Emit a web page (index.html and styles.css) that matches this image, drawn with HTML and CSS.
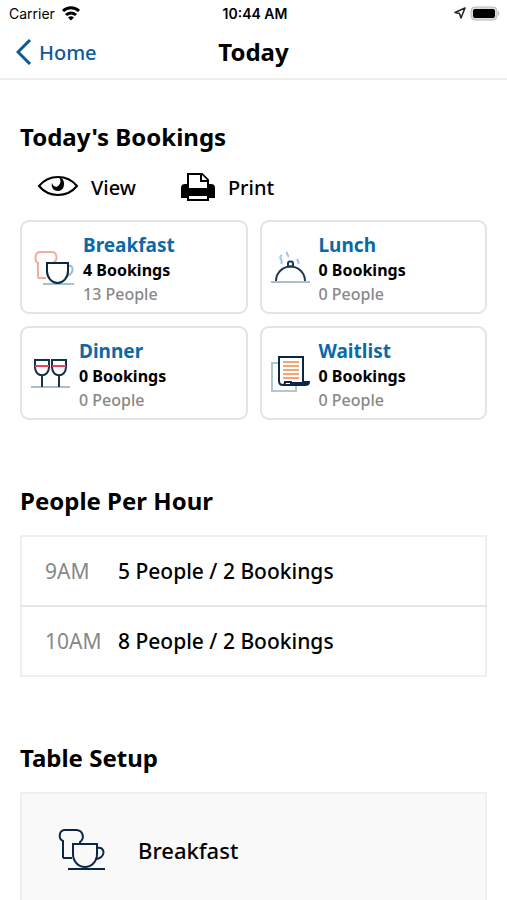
FILE: index.html
```html
<!DOCTYPE html>
<html lang="en">
  <head>
    <meta charset="utf-8">
    <meta name="viewport" content="width=device-width, initial-scale=1">
    <title>Today</title>
    <link rel="stylesheet" href="styles.css">
  </head>

  <body>
    <div class="statusBar">
      <div class="statusLeft">
        <span>Carrier</span>
        <svg width="20" height="15" viewBox="0 0 20 15" fill="none" stroke="#000" stroke-width="3">
          <path d="M2 5a11.500 11.500 0 0 1 16 0"/>
          <path d="M5 9a7 7 0 0 1 10 0"/>
          <path d="M10 14.500l-3-3a4.500 4.500 0 0 1 6 0z" fill="#000" stroke="none"/>
        </svg>
      </div>
      <div class="statusTime">10:44 AM</div>
      <div class="statusRight">
        <svg width="12" height="12" viewBox="0 0 12 12" fill="none" stroke="#222" stroke-width="1.500" stroke-linejoin="round">
          <path d="M11 1L1 5.500l4.500 1L7 11z"/>
        </svg>
        <svg width="31" height="15" viewBox="0 0 31 15">
          <rect x="1" y="1" width="26" height="13" rx="4" fill="#ddd" stroke="#bbb"/>
          <rect x="3" y="3" width="22" height="9" rx="2" fill="#000"/>
          <path d="M28 5a3 3 0 0 1 0 5z" fill="#bbb"/>
        </svg>
      </div>
    </div>

    <header class="navBar">
      <a class="back" href="#">
        <svg width="16" height="26" viewBox="0 0 16 26" fill="none" stroke="#0b5a9c" stroke-width="3">
          <path d="M14 1L2 13l12 12"/>
        </svg>
        Home
      </a>
      <h1>Today</h1>
    </header>

    <main>
      <section>
        <h2>Today's Bookings</h2>
        <div class="actions">
          <button class="action">
            <svg width="42" height="22" viewBox="0 0 42 22">
              <path d="M2 10C12-2 30-2 40 10 30 22 12 22 2 10z" fill="#fff" stroke="#000" stroke-width="2"/>
              <path d="M22 1c7 1 7 14-1 14-5 0-7-4-6-8 1 4 5 5 7 2 2-2 2-5 0-8z" fill="#000"/>
            </svg>
            View
          </button>
          <button class="action print">
            <svg width="36" height="30" viewBox="0 0 36 30">
              <path d="M1 16q0-4 4-4h26q4 0 4 4v10H1z" fill="#000"/>
              <path d="M8 17V2h14l6 6v9z" fill="#fff" stroke="#000" stroke-width="2"/>
              <path d="M21 2v7h7" fill="#fff" stroke="#000" stroke-width="2"/>
              <path d="M8 16h20v7H8z" fill="#000"/>
              <path d="M8 23h20v5H8z" fill="#fff" stroke="#000" stroke-width="2"/>
            </svg>
            Print
          </button>
        </div>

        <div class="cards">
          <a class="card breakfast" href="#">
            <svg width="44" height="40" viewBox="0 0 44 40" fill="none" stroke-width="2">
              <path d="M7 31V16C3 14 4 5 9 5h12c5 0 6 8 2 10v2M7 31h8" stroke="#f8aaa0"/>
              <path d="M37 19c7-2 6 10-3 10" stroke="#a3b8ca"/>
              <path d="M12 37h31" stroke="#a9bfcc"/>
              <path d="M16 16h21v8c0 7-5 12-10.500 12S16 31 16 24z" fill="#fff" stroke="#0b2748"/>
            </svg>
            <div class="cardText">
              <h3>Breakfast</h3>
              <p class="bookings">4 Bookings</p>
              <p class="people">13 People</p>
            </div>
          </a>
          <a class="card" href="#">
            <svg width="40" height="40" viewBox="0 0 40 40" fill="none" stroke-width="2">
              <path d="M0 35h39" stroke="#a9c0cc"/>
              <path d="M5 34a14.500 14.500 0 0 1 29 0" stroke="#203a54"/>
              <path d="M17 19.500v-3q0-2 2-2h1q2 0 2 2v3z" stroke="#203a54"/>
              <path d="M11 8c-5 3 2 5-1 9M16 5c-1 2 2 3 1 5M27 12c-2 2 2 2 0 5" stroke="#9cc3f5"/>
            </svg>
            <div class="cardText">
              <h3>Lunch</h3>
              <p class="bookings">0 Bookings</p>
              <p class="people">0 People</p>
            </div>
          </a>
          <a class="card" href="#">
            <svg width="40" height="40" viewBox="0 0 40 40" fill="none" stroke-width="2">
              <path d="M0 34h39" stroke="#a9c0cc"/>
              <path d="M4 7h14v7c0 11-14 11-14 0zM21 7h14v7c0 11-14 11-14 0zM11 22v12M28 22v12" stroke="#16314e"/>
              <path d="M4 13h14M21 13h14" stroke="#ee3f61"/>
            </svg>
            <div class="cardText">
              <h3>Dinner</h3>
              <p class="bookings">0 Bookings</p>
              <p class="people">0 People</p>
            </div>
          </a>
          <a class="card" href="#">
            <svg width="40" height="40" viewBox="0 0 40 40" fill="none" stroke-width="2">
              <path d="M1 10h24v28H1z" stroke="#aec8d3"/>
              <path d="M8 28V4h24v25h6c0 3-2 3-4 3H12c-3 0-4-1-4-4z" fill="#fff" stroke="#0b2748"/>
              <path d="M12 32c2 0 2-2 2-3h6v1h17" stroke="#0b2748"/>
              <path d="M12 9h16M12 13h16M12 17h16M12 21h16M12 25h16" stroke="#f7a36f"/>
            </svg>
            <div class="cardText">
              <h3>Waitlist</h3>
              <p class="bookings">0 Bookings</p>
              <p class="people">0 People</p>
            </div>
          </a>
        </div>
      </section>

      <section>
        <h2>People Per Hour</h2>
        <table class="hours">
          <tr>
            <th scope="row">9AM</th>
            <td>5 People / 2 Bookings</td>
          </tr>
          <tr>
            <th scope="row">10AM</th>
            <td>8 People / 2 Bookings</td>
          </tr>
        </table>
      </section>

      <section>
        <h2>Table Setup</h2>
        <a class="setup" href="#">
          <svg width="48" height="44" viewBox="0 0 48 44" fill="none" stroke="#0b2748" stroke-width="2">
            <path d="M5 30V13C0 11 1 3 6 2h13c6 1 8 8 3 12v2M5 30h9"/>
            <path d="M39 20c9-2 9 11-2 11"/>
            <path d="M10 41h37"/>
            <path d="M15 16h24v10c0 8-6 13-12 13s-12-5-12-13z"/>
          </svg>
          Breakfast
        </a>
      </section>
    </main>
  </body>
</html>
```
FILE: styles.css
```css
* {
  box-sizing: border-box;
}

body {
  display: flex;
  flex-direction: column;
  height: 100vh;
  margin: 0;
  background-color: #fff;
  color: #000;
  font-family: "Noto Sans", "Open Sans", sans-serif;
}

h1, h2, h3, p {
  margin: 0;
}

a {
  color: inherit;
  text-decoration: none;
}

svg {
  display: block;
  flex-shrink: 0;
}

.statusBar {
  display: grid;
  grid-template-columns: 1fr auto 1fr;
  align-items: center;
  height: 26px;
  padding: 0 6px 0 9px;
  font-family: Inter, sans-serif;
  font-size: 14px;
}

.statusLeft {
  display: flex;
  align-items: center;
  gap: 6px;
}

.statusTime {
  font-weight: 600;
}

.statusRight {
  display: flex;
  align-items: center;
  justify-content: flex-end;
  gap: 4px;
}

.navBar {
  display: grid;
  grid-template-columns: 1fr auto 1fr;
  align-items: center;
  height: 54px;
  padding: 0 16px;
  border-bottom: 2px solid #eee;
}

.navBar h1 {
  font-size: 24px;
  line-height: 32px;
}

.back {
  display: flex;
  align-items: center;
  gap: 7px;
  color: #0b5a9c;
  font-size: 20px;
  font-weight: 500;
}

main {
  flex: 1;
  overflow-y: auto;
  padding: 40px 20px;
  scrollbar-width: none;
}

section {
  margin-bottom: 64px;
}

h2 {
  margin-bottom: 17px;
  font-size: 24px;
  line-height: 34px;
}

.actions {
  display: flex;
  gap: 44px;
  margin-bottom: 17px;
  padding-left: 17px;
}

.action {
  display: flex;
  align-items: center;
  gap: 12px;
  height: 32px;
  padding: 0;
  border: 0;
  background: none;
  color: #000;
  font-family: inherit;
  font-size: 20px;
  font-weight: 500;
}

.cards {
  display: grid;
  grid-template-columns: 1fr 1fr;
  gap: 12px;
}

.card {
  display: flex;
  align-items: center;
  gap: 8px;
  height: 94px;
  padding: 0 9px;
  border: 2px solid #e4e4e4;
  border-radius: 9px;
}

.cardText {
  padding-top: 4px;
}

.card h3 {
  color: #0b69a8;
  font-size: 19px;
  line-height: 26px;
}

.card p {
  font-size: 16px;
  line-height: 24px;
}

.card .bookings {
  font-weight: 700;
}

.card .people {
  color: #888;
  font-weight: 500;
}

.hours {
  width: 100%;
  border: 2px solid #eef0f0;
  border-collapse: collapse;
}

.hours tr + tr {
  border-top: 2px solid #e4e6e6;
}

.hours th, .hours td {
  height: 70px;
  padding: 0;
  font-size: 21px;
  font-weight: 500;
  text-align: left;
}

.hours th {
  width: 97px;
  padding-left: 23px;
  color: #888;
  font-weight: 400;
}

.setup {
  display: flex;
  align-items: center;
  gap: 32px;
  height: 116px;
  padding: 0 36px;
  border: 2px solid #eef0f0;
  background-color: #f9f9f9;
  font-size: 22px;
  font-weight: 500;
}
```
